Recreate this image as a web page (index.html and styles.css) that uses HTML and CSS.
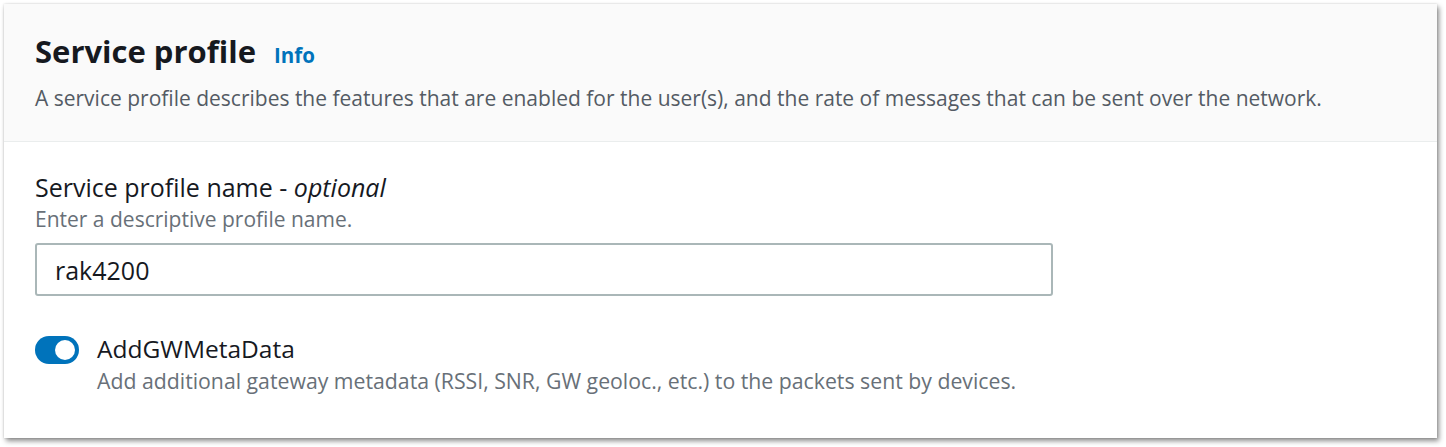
FILE: index.html
```html
<!DOCTYPE html>
<html lang="en">
<head>
<meta charset="utf-8">
<title>Service profile</title>
<link rel="stylesheet" href="styles.css">
</head>
<body>
<section class="card">
  <header class="card-header">
    <h2 class="title">Service profile <a class="info" href="#">Info</a></h2>
    <p class="desc">A service profile describes the features that are enabled for the user(s), and the rate of messages that can be sent over the network.</p>
  </header>
  <div class="card-body">
    <div class="field">
      <label class="label" for="name">Service profile name - <i>optional</i></label>
      <div class="hint">Enter a descriptive profile name.</div>
      <input class="input" id="name" type="text" value="rak4200">
    </div>
    <div class="toggle-row">
      <span class="toggle"><span class="knob"></span></span>
      <div class="toggle-text">
        <div class="toggle-label">AddGWMetaData</div>
        <div class="toggle-desc">Add additional gateway metadata (RSSI, SNR, GW geoloc., etc.) to the packets sent by devices.</div>
      </div>
    </div>
  </div>
</section>
</body>
</html>
```

FILE: styles.css
```css
html, body {
  margin: 0;
  background: #ffffff;
}
body {
  padding: 4px 9px 9px 4px;
  font-family: "Open Sans", "Noto Sans", sans-serif;
  color: #16191f;
}
.card {
  width: 1433px;
  height: 434px;
  box-sizing: border-box;
  background: #ffffff;
  box-shadow: 2px 3px 5px rgba(0, 0, 0, 0.45), 0 0 2px rgba(0, 0, 0, 0.15);
  display: flex;
  flex-direction: column;
}
.card-header {
  background: #fafafa;
  border-bottom: 1px solid #eaeded;
  padding: 27px 31px 0 31px;
  height: 138px;
  box-sizing: border-box;
}
.title {
  margin: 0;
  font-size: 31px;
  font-weight: 700;
  line-height: 40px;
  display: flex;
  align-items: baseline;
  gap: 18px;
}
.info {
  font-size: 20.5px;
  font-weight: 700;
  color: #0073bb;
  text-decoration: none;
}
.desc {
  margin: 9px 0 0 0;
  font-size: 21px;
  line-height: 28px;
  color: #545b64;
}
.card-body {
  padding: 29px 31px 0 31px;
}
.field {
  display: flex;
  flex-direction: column;
}
.label {
  font-size: 25px;
  line-height: 33px;
}
.label i {
  font-style: italic;
}
.hint {
  font-size: 21px;
  line-height: 30px;
  color: #687078;
}
.input {
  margin-top: 9px;
  width: 1018px;
  height: 53px;
  box-sizing: border-box;
  border: 2px solid #aab7b8;
  border-radius: 3px;
  padding: 0 18px;
  font-family: inherit;
  font-size: 25px;
  color: #16191f;
  background: #ffffff;
  outline: none;
}
.toggle-row {
  display: flex;
  align-items: flex-start;
  gap: 18px;
  margin-top: 37px;
}
.toggle {
  flex: none;
  width: 44px;
  height: 28px;
  border-radius: 14px;
  background: #0073bb;
  display: flex;
  align-items: center;
  justify-content: flex-end;
  padding: 0 4px;
  box-sizing: border-box;
  margin-top: 3px;
}
.knob {
  width: 20px;
  height: 20px;
  border-radius: 50%;
  background: #ffffff;
}
.toggle-label {
  font-size: 24.5px;
  line-height: 32px;
}
.toggle-desc {
  font-size: 21.25px;
  line-height: 28px;
  color: #687078;
  margin-top: 2px;
}
```
